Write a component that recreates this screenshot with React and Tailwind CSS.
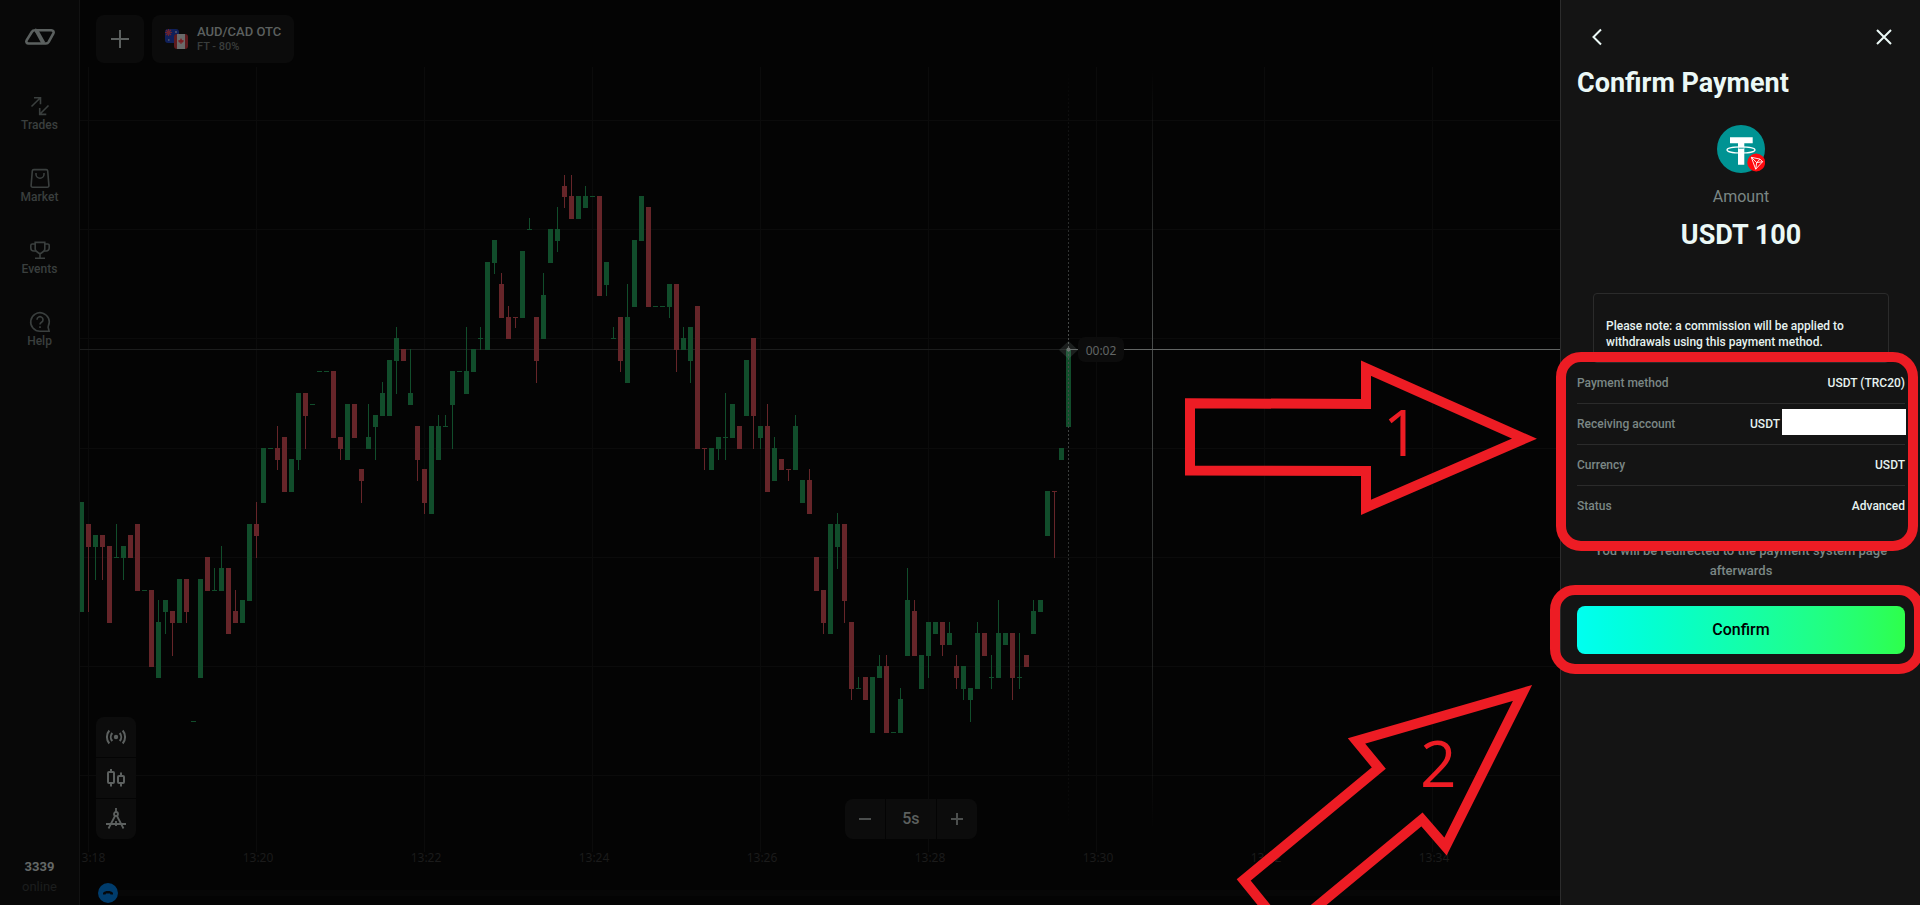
import React from "react";

// [direction, open/close top level, bottom level, high level, low level]
const CANDLES = [
  ["g", 35, 45], ["r", 37, 39, 37, 45], ["g", 38, 39, 38, 42], ["r", 38, 39, 38, 42], ["r", 39, 46],
  ["g", 40, 40, 37, 40], ["g", 39, 40, 39, 42], ["r", 38, 40], ["r", 37, 43], ["g", 43, 43],
  ["r", 43, 50], ["g", 46, 51, 44, 51], ["g", 44, 45, 44, 47], ["r", 45, 46, 45, 49], ["g", 42, 46],
  ["r", 42, 45, 42, 46], ["g", 55, 55], ["g", 42, 51], ["r", 40, 43], ["g", 43, 43, 41, 43],
  ["g", 41, 43, 39, 43], ["r", 41, 47], ["r", 45, 46, 43, 46], ["g", 44, 46], ["g", 37, 44],
  ["r", 37, 38, 35, 40], ["g", 30, 35], ["g", 30, 30], ["r", 30, 31, 28, 32], ["r", 29, 34],
  ["g", 31, 34], ["g", 25, 31, 25, 32], ["r", 25, 27, 25, 30], ["g", 26, 26], ["g", 23, 23],
  ["g", 23, 23], ["r", 23, 29], ["r", 29, 30, 29, 31], ["g", 26, 31], ["r", 26, 29],
  ["r", 32, 33, 32, 35], ["g", 29, 30, 26, 30], ["g", 27, 28, 27, 31], ["g", 25, 27, 24, 27], ["g", 22, 27],
  ["g", 20, 22, 19, 25], ["r", 21, 22], ["g", 25, 26, 21, 26], ["r", 28, 31, 28, 33], ["r", 32, 35, 32, 36],
  ["g", 28, 36], ["g", 28, 31, 27, 31], ["g", 28, 28, 27, 28], ["g", 23, 26, 23, 30], ["g", 23, 23],
  ["g", 23, 25, 19, 25], ["g", 21, 23], ["g", 20, 20, 19, 21], ["g", 13, 21], ["g", 11, 13, 11, 14],
  ["r", 15, 18, 14, 18], ["r", 18, 20, 17, 20], ["r", 18, 18, 18, 19], ["g", 12, 18], ["g", 10, 10, 9, 10],
  ["r", 18, 22, 18, 24], ["g", 16, 20, 14, 20], ["g", 10, 13], ["g", 10, 11, 8, 12], ["r", 6, 7, 5, 8],
  ["r", 7, 9, 5, 9], ["g", 7, 9], ["g", 7, 8, 6, 8], ["g", 7, 7], ["r", 7, 16],
  ["g", 13, 15, 13, 16], ["g", 20, 20, 19, 20], ["r", 18, 22, 18, 23], ["g", 18, 24, 15, 24], ["g", 11, 17],
  ["g", 7, 11], ["r", 8, 17], ["g", 17, 17], ["g", 17, 17], ["g", 15, 17, 15, 18],
  ["r", 15, 21, 15, 23], ["g", 20, 21, 19, 21], ["g", 19, 22, 19, 24], ["r", 17, 30], ["r", 30, 30, 30, 32],
  ["g", 30, 32], ["g", 29, 30, 29, 31], ["g", 29, 29, 25, 31], ["g", 26, 29], ["r", 28, 30],
  ["g", 22, 27], ["r", 20, 27, 20, 30], ["g", 28, 29, 28, 30], ["r", 28, 34, 26, 34], ["g", 30, 33, 29, 33],
  ["r", 31, 32], ["r", 32, 32, 32, 33], ["g", 28, 32, 27, 32], ["g", 33, 35], ["r", 33, 36, 32, 36],
  ["r", 40, 43], ["r", 43, 46, 43, 47], ["g", 37, 47], ["g", 37, 39, 36, 41], ["r", 37, 44, 37, 46],
  ["r", 46, 52, 46, 53], ["g", 52, 52, 51, 52], ["r", 51, 53], ["g", 51, 56], ["g", 50, 51, 49, 51],
  ["r", 50, 56, 49, 56], ["g", 56, 56], ["g", 53, 56, 52, 56], ["g", 44, 49, 41, 49], ["r", 45, 49, 44, 49],
  ["g", 49, 52], ["g", 46, 49, 46, 51], ["g", 46, 47], ["r", 46, 48, 46, 49], ["g", 47, 48, 46, 48],
  ["r", 50, 51, 49, 52], ["g", 50, 52, 50, 53], ["g", 52, 53, 52, 55], ["g", 47, 52, 46, 52], ["r", 47, 49],
  ["g", 51, 51, 49, 52], ["g", 47, 51, 44, 51], ["g", 47, 48], ["r", 47, 51, 47, 53], ["g", 51, 51, 47, 52],
  ["r", 49, 50], ["g", 45, 47, 44, 47], ["g", 44, 45], ["g", 34, 38], ["r", 34, 34, 34, 40],
  ["g", 30, 31], ["g", 21, 28],
];

const levelY = (level) => Math.round(120 + level * 10.92);
const FILL = { g: "#114d2b", r: "#662529" };
const TIMES = ["13:18", "13:20", "13:22", "13:24", "13:26", "13:28", "13:30", "13:32", "13:34"];
const GRID_Y = [120, 229, 338, 448, 557, 666, 775];

function Chart() {
  return (
    <svg className="absolute inset-0 h-full w-full" aria-hidden="true">
      <defs>
        <linearGradient id="fade" gradientUnits="userSpaceOnUse" x1="0" y1="70" x2="0" y2="830">
          <stop offset="0" stopColor="#3f4241" stopOpacity="0" />
          <stop offset="0.35" stopColor="#4a4d4c" />
          <stop offset="0.5" stopColor="#3f4241" />
          <stop offset="1" stopColor="#3f4241" stopOpacity="0" />
        </linearGradient>
      </defs>
      <g shapeRendering="crispEdges">
        {TIMES.map((t, i) => (
          <rect key={t} x={8 + i * 168} y="67" width="1" height="785" fill="#0b0b0b" />
        ))}
        {GRID_Y.map((y) => (
          <rect key={y} x="0" y={y} width="100%" height="1" fill="#0b0b0b" />
        ))}
        <rect x="0" y="349" width="988" height="1" fill="#1c1d1d" />
        {CANDLES.map(([dir, top, bottom, high = top, low = bottom], i) => {
          const x = 1 + i * 7;
          return (
            <g key={i} fill={FILL[dir]}>
              <rect x={x - 2} y={levelY(top)} width="5" height={levelY(bottom) - levelY(top) + 1} />
              <rect x={x} y={levelY(high)} width="1" height={levelY(low) - levelY(high) + 1} />
            </g>
          );
        })}
        <rect x="1072" y="70" width="1" height="758" fill="url(#fade)" />
        <rect x="988" y="349" width="100%" height="1" fill="#626564" />
      </g>
      <path d="M988.5 70V830" stroke="url(#fade)" strokeWidth="1" strokeDasharray="2 2" />
      <path d="M979 350l9.500-9 9.500 9-9.500 9z" fill="#8a9a94" fillOpacity="0.18" />
      <circle cx="988.5" cy="349.500" r="2" fill="#6d7270" />
      <rect x="998" y="337" width="46" height="25" rx="7" fill="#0c0c0c" />
      <g fontSize="12" textAnchor="middle" className="font-['Noto_Sans',sans-serif]">
        <text x="1021" y="355" fill="#626665">00:02</text>
        {TIMES.map((t, i) => (
          <text key={t} x={10 + i * 168} y="862" fill="#1b1b1b">{t}</text>
        ))}
      </g>
    </svg>
  );
}

function Icon({ children, size = 24, width = 1.6, className = "" }) {
  return (
    <svg
      width={size} height={size} viewBox="0 0 24 24" fill="none" stroke="currentColor"
      strokeWidth={width} aria-hidden="true" className={className}
    >
      {children}
    </svg>
  );
}

const NAV = [
  { label: "Trades", icon: <path d="M3.500 12.500L12.400 3.800M6 3.700h6.500v6.600M20.500 11.500L11.800 20.200M11.700 14v6.400h6.600" /> },
  {
    label: "Market",
    icon: (
      <>
        <path d="M5.800 3.600h12.400a1.500 1.500 0 0 1 1.500 1.300l1.200 14.700a1.600 1.600 0 0 1-1.600 1.700H4.700a1.600 1.600 0 0 1-1.600-1.700L4.300 4.900a1.500 1.500 0 0 1 1.500-1.300z" />
        <path d="M8 7v1.200a4 4 0 0 0 8 0V7" />
      </>
    ),
  },
  {
    label: "Events",
    icon: (
      <>
        <path d="M7.200 4.400h9.600v6.800c0 2-2.800 3.300-4.800 4.800-2-1.500-4.800-2.800-4.800-4.800zM12 16v4M7 20.200h10" />
        <path d="M7.200 6H4.300a1.500 1.500 0 0 0-1.500 1.500V10a3 3 0 0 0 3 3H8M16.800 6h2.900a1.500 1.500 0 0 1 1.500 1.500V10a3 3 0 0 1-3 3H16" />
      </>
    ),
  },
  {
    label: "Help",
    icon: (
      <>
        <path d="M12 21.300a9.300 9.300 0 1 1 8.300-5.100c-.3.700-.3 1.200 0 1.900l.8 3.200z" />
        <path d="M9 9.700a3 3 0 1 1 4.500 2.600c-1 .6-1.500 1-1.500 2.200M12 16.200v1.900" />
      </>
    ),
  },
];

function Sidebar() {
  return (
    <aside className="flex w-20 shrink-0 flex-col items-center border-r border-[#121212] bg-[#080808] pt-7">
      <a href="#home" aria-label="Home" className="flex h-[18px] text-[#5b605f]">
        <svg width="32" height="18" viewBox="0 0 32 18" fill="none" stroke="currentColor" strokeWidth="2.600" strokeLinejoin="round">
          <path d="M11 2.300h16.400c1.800 0 2.800 1.500 2 3l-4.700 8.500c-.6 1-1.500 1.700-2.700 1.700H4.500c-1.800 0-2.700-1.600-1.900-3.100L7.800 4C8.400 3 9.600 2.300 11 2.300z" />
          <path d="M11 2.500c1 0 1.700.5 2.200 1.400L19.500 15.300" strokeWidth="4" />
        </svg>
      </a>
      <nav className="mt-12 flex flex-col gap-8 text-[#3a3f3e]">
        {NAV.map(({ label, icon }) => (
          <a key={label} href={`#${label.toLowerCase()}`} className="flex h-10 flex-col items-center text-[12px] leading-[14px] font-medium">
            <Icon className="shrink-0">{icon}</Icon>
            <span>{label}</span>
          </a>
        ))}
      </nav>
      <div className="mt-auto flex flex-col items-center pb-2 text-[13px] leading-5">
        <span className="font-bold text-[#646867]">3339</span>
        <span className="text-[#1c1e1e]">online</span>
      </div>
    </aside>
  );
}

function Flags() {
  return (
    <svg width="24" height="22" viewBox="0 0 24 22" aria-hidden="true">
      <rect x="0" y="1" width="14" height="14" rx="3" fill="#10205a" />
      <path d="M0 4.500h7M3.500 1v7M1 2l5 5M6 2L1 7" stroke="#6b2430" strokeWidth="1.200" />
      <path d="M10 4h2M3 12h1.500M10 8.500h1" stroke="#777" strokeWidth="1.200" />
      <rect x="9" y="6" width="14" height="15" rx="3" fill="#5e1a1e" />
      <rect x="12" y="6" width="8" height="15" fill="#6a6a6a" />
      <path d="M16 10l1 2 2 .5-1 2h-1.500V16h-1v-1.500H14l-1-2 2-.5z" fill="#7c1d22" />
    </svg>
  );
}

function Workspace() {
  const tool = "flex size-10 items-center justify-center bg-[#0c0c0c]";
  return (
    <main className="relative flex min-w-0 flex-1 flex-col overflow-hidden bg-[#040404]">
      <Chart />
      <div className="relative flex gap-2 px-4 pt-[15px]">
        <button type="button" aria-label="Add asset" className="flex size-12 items-center justify-center rounded-lg bg-[#0b0b0b] text-[#5c605f]">
          <Icon width={2}><path d="M12 3v18M3 12h18" /></Icon>
        </button>
        <button type="button" className="flex h-12 items-center gap-2 rounded-lg bg-[#0b0b0b] px-[13px] text-left">
          <Flags />
          <span className="flex flex-col">
            <span className="text-[13px] leading-4 font-medium text-[#5c605f]">AUD/CAD OTC</span>
            <span className="text-[11px] leading-[14px] font-medium text-[#393d3c]">FT - 80%</span>
          </span>
        </button>
      </div>
      <div className="relative mt-auto flex items-end px-4 text-[#5c605f]">
        <div className="flex flex-col gap-px overflow-hidden rounded-lg">
          <button type="button" aria-label="Signals" className={tool}>
            <Icon width={2}>
              <circle cx="12" cy="12" r="2.200" fill="currentColor" stroke="none" />
              <path d="M8.300 8a6 6 0 0 0 0 8M15.700 8a6 6 0 0 1 0 8M5.300 5.500a10 10 0 0 0 0 13M18.700 5.500a10 10 0 0 1 0 13" />
            </Icon>
          </button>
          <button type="button" aria-label="Chart type" className={tool}>
            <Icon width={2}>
              <rect x="4" y="6" width="6" height="11" rx="1" />
              <rect x="14" y="10" width="6" height="7" rx="1" />
              <path d="M7 3v3M7 17v3.500M17 6.500V10M17 17v3.500" />
            </Icon>
          </button>
          <button type="button" aria-label="Drawing tools" className={tool}>
            <Icon width={1.8}>
              <circle cx="12" cy="7" r="2" />
              <path d="M12 1v4M11 9L4.500 21.500M13 9l6.500 12.500M2 17h20M12 14v5" />
            </Icon>
          </button>
        </div>
        <div className="flex-[5]" />
        <div className="flex gap-px overflow-hidden rounded-lg">
          <button type="button" aria-label="Zoom out" className={tool}>
            <Icon width={2} className="text-[#4c4f4e]"><path d="M6 12h12" /></Icon>
          </button>
          <button type="button" className="flex h-10 w-[50px] items-center justify-center bg-[#0c0c0c] text-[16px] font-medium">5s</button>
          <button type="button" aria-label="Zoom in" className={tool}>
            <Icon width={2} className="text-[#4c4f4e]"><path d="M6 12h12M12 6v12" /></Icon>
          </button>
        </div>
        <div className="flex-[4]" />
      </div>
      <div className="relative flex h-[66px] items-end pb-[2px] pl-[18px]">
        <button type="button" aria-label="Support chat" className="flex size-5 shrink-0 items-center justify-center rounded-full bg-[#003c6c]">
          <svg width="12" height="6" viewBox="0 0 12 6" aria-hidden="true">
            <path d="M1 4.500V3C3 .4 9 .4 11 3v1.500H8.500L8 3.500H4l-.5 1z" fill="#04080c" />
          </svg>
        </button>
        <div className="mb-[7px] h-[6px] flex-1 bg-[#070707]" />
      </div>
    </main>
  );
}

function TetherLogo() {
  return (
    <svg width="48" height="48" viewBox="0 0 48 48" role="img" aria-label="Tether on Tron" className="self-center">
      <circle cx="24" cy="24" r="24" fill="#009393" />
      <path d="M13 12.300h22.700v6H27.300v21.400H21V18.300h-8z" fill="#fff" />
      <ellipse cx="24" cy="24.900" rx="14" ry="3.100" fill="none" stroke="#fff" strokeWidth="1.200" />
      <path d="M21.500 23.200h5.300" stroke="#009393" strokeWidth="0.900" />
      <circle cx="39.200" cy="37.500" r="8.900" fill="#ff0a0f" />
      <path d="M34.300 32.300l8.700 1.800 2.600 2.600-6.900 7.500zM34.300 32.300l5.400 5.300 5.900-.9M43 34.100l-3.300 3.500-1 6.600" fill="none" stroke="#fff" strokeWidth="0.900" strokeLinejoin="round" />
    </svg>
  );
}

function Row({ label, children }) {
  return (
    <div className="flex h-[41px] items-center justify-between border-b border-[#2b2b2b] last:border-transparent">
      <dt className="text-[#7b8785]">{label}</dt>
      <dd className="flex items-center text-[#e6f2f0]">{children}</dd>
    </div>
  );
}

function PaymentPanel() {
  return (
    <section className="flex w-[360px] shrink-0 flex-col border-l border-[#2c2c2c] bg-[#141414] pt-[17px] pr-[15px] pl-4 text-[#ebf8f6]">
      <div className="flex justify-between">
        <button type="button" aria-label="Back" className="flex size-10 items-center justify-center">
          <Icon width={2}><path d="M16 4.500L8.500 12l7.500 7.500" /></Icon>
        </button>
        <button type="button" aria-label="Close" className="mr-px flex size-10 items-center justify-center">
          <Icon width={2}><path d="M5 5l14 14M19 5L5 19" /></Icon>
        </button>
      </div>
      <h1 className="mt-[10px] text-[27px] leading-8 font-bold">Confirm Payment</h1>
      <div className="mt-[26px] flex flex-col items-center">
        <TetherLogo />
        <p className="mt-3 text-[16px] leading-6 text-[#7b8785]">Amount</p>
        <p className="mt-2 text-[27px] leading-9 font-bold">USDT 100</p>
      </div>
      <p className="mx-4 mt-10 rounded border border-[#2b2b2b] px-3 pt-6 pb-3 text-[12px] leading-4 font-medium text-[#e6f2f0]">
        Please note: a commission will be applied to withdrawals using this payment method.
      </p>
      <dl className="text-[12px] font-medium">
        <Row label="Payment method">USDT (TRC20)</Row>
        <Row label="Receiving account">
          USDT
          <span className="-my-px -mr-px mb-1 ml-[2px] h-[26px] w-[124px] bg-white" />
        </Row>
        <Row label="Currency">USDT</Row>
        <Row label="Status">Advanced</Row>
      </dl>
      <p className="mt-[14px] px-4 text-center text-[13px] leading-5 font-medium text-[#7b8785]">
        You will be redirected to the payment system page afterwards
      </p>
      <button type="button" className="mt-[25px] h-12 rounded-lg bg-linear-to-r from-[#00fff0] to-[#2eff4a] text-[16px] font-medium text-black">
        Confirm
      </button>
    </section>
  );
}

function Annotations() {
  return (
    <svg className="pointer-events-none absolute top-0 right-0 h-full w-[760px]" fill="none" stroke="#ed1c24" strokeWidth="10">
      <g transform="translate(-1160 0)">
        <path d="M1190 403.300L1366 404V368.300L1524.500 438.700L1366 507.300V471L1190 470.500z" />
        <path d="M1522.500 693L1356.500 741L1378.800 768L1243.700 880L1286 932L1422 819.500L1445.500 846.500z" />
        <rect x="1561" y="357" width="352" height="189" rx="20" />
        <rect x="1555" y="590" width="364" height="79" rx="20" />
        <g fill="#ed1c24" stroke="none" fontSize="64" className="font-['Open_Sans',sans-serif]">
          <text x="1383" y="456">1</text>
          <text x="1420" y="787">2</text>
        </g>
      </g>
    </svg>
  );
}

export default function App() {
  return (
    <div className="relative flex min-h-screen overflow-hidden bg-[#040404] font-[Roboto,sans-serif]">
      <Sidebar />
      <Workspace />
      <PaymentPanel />
      <Annotations />
    </div>
  );
}
